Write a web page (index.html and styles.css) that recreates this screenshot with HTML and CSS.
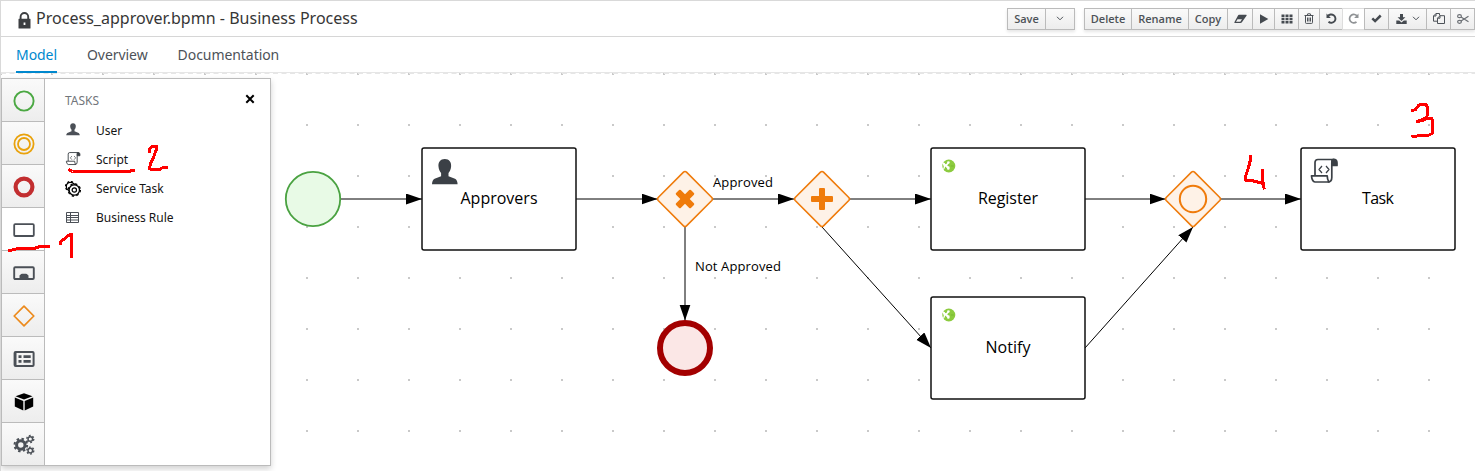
FILE: index.html
```html
<!DOCTYPE html>
<html lang="en">
<head>
<meta charset="utf-8">
<title>Process_approver.bpmn - Business Process</title>
<link rel="stylesheet" href="styles.css">
</head>
<body>
<div class="editor">
  <header class="header">
    <svg class="lock" width="13" height="17" viewBox="0 0 13 17"><path d="M2.600 7V4.800a3.800 3.800 0 0 1 7.600 0V7" fill="none" stroke="#3d3f42" stroke-width="1.900"/><path fill="#3d3f42" fill-rule="evenodd" d="M1 6.800h11q.5 0 .5.500V16q0 .5-.5.500H1q-.5 0-.5-.500V7.300q0-.5.500-.500ZM5.600 10.500v2.500h1.800v-2.500Z"/></svg>
    <h1 class="title">Process_approver.bpmn - Business Process</h1>
    <div class="toolbar">
      <div class="group save-group">
        <button class="btn w-save">Save</button>
        <button class="btn w-caret"><svg width="8" height="5" viewBox="0 0 8 5"><path class="line" d="M1 .8 4 3.800 7 .8"/></svg></button>
      </div>
      <div class="group">
        <button class="btn w-delete">Delete</button>
        <button class="btn w-rename">Rename</button>
        <button class="btn w-copy">Copy</button>
        <button class="btn w-eraser"><svg width="13" height="10" viewBox="0 0 13 10"><path class="solid" fill-rule="evenodd" d="M5 .8h7.200q.8.200.3 1L7.900 8.300q-.5.700-1.400.7H.9q-1-.2-.4-1.100L4 1.500Q4.300.8 5 .8ZM2 7.800h4.300l1.700-2.500H3.500Z"/></svg></button>
        <button class="btn w-play"><svg width="10" height="10" viewBox="0 0 10 10"><path class="solid" d="M1 .3 9.300 5 1 9.700Z"/></svg></button>
        <button class="btn w-grid"><svg width="12" height="10" viewBox="0 0 12 10"><path class="solid" d="M.5.500h3v2.400h-3zm4 0h3v2.400h-3zm4 0h3v2.400h-3zm-8 3.300h3v2.400h-3zm4 0h3v2.400h-3zm4 0h3v2.400h-3zm-8 3.300h3v2.400h-3zm4 0h3v2.400h-3zm4 0h3v2.400h-3z"/></svg></button>
        <button class="btn w-trash"><svg width="10" height="11" viewBox="0 0 10 11"><path class="line" d="M.5 2.500h9M3.200 2.300l.5-1.500h2.600l.5 1.500M1.500 2.600v7q0 .8.800.8h5.400q.8 0 .8-.8v-7M3.500 4.500v4M5 4.500v4M6.500 4.500v4"/></svg></button>
        <button class="btn w-undo"><svg width="11" height="11" viewBox="0 0 11 11"><path d="M1.700 3.400A4.200 4.200 0 1 1 2.500 8.800" fill="none" stroke="#454a50" stroke-width="1.900"/><path class="solid" d="M.5.600v4.400h4.400Z"/></svg></button>
        <button class="btn w-redo off"><svg width="11" height="11" viewBox="0 0 11 11"><path d="M9.300 3.400A4.200 4.200 0 1 0 8.500 8.800" fill="none" stroke="#909396" stroke-width="1.700"/><path fill="#909396" d="M10.500.6v4.400H6.100Z"/></svg></button>
        <button class="btn w-check"><svg width="11" height="9" viewBox="0 0 11 9"><path d="m1.300 4.400 2.800 2.700L9.700 1.500" fill="none" stroke="#454a50" stroke-width="2.500"/></svg></button>
        <button class="btn w-download"><svg width="11" height="10" viewBox="0 0 11 10"><path class="solid" fill-rule="evenodd" d="M4 0h3v3.200h2.400L5.500 7 1.600 3.200H4ZM.3 6.500h2.900l2.300 2.100 2.300-2.100h2.900v3.400H.3Z"/></svg><svg class="chev" width="8" height="5" viewBox="0 0 8 5"><path class="line" d="M1 .8 4 3.800 7 .8"/></svg></button>
        <button class="btn w-files"><svg width="12" height="11" viewBox="0 0 12 11"><path class="line" d="M4.500 8.200h-4V3L3 .5h3.500v2M3 .5V3H.5M7 2.700h4.500v7.800h-7V5.200ZM7 2.700v2.500H4.500"/></svg></button>
        <button class="btn w-cut"><svg width="12" height="10" viewBox="0 0 12 10"><g fill="none" stroke="#6b6f74" stroke-width="1.200"><ellipse cx="2.500" cy="2.200" rx="1.900" ry="1.500"/><ellipse cx="2.500" cy="7.800" rx="1.900" ry="1.500"/><path d="m4 3 7.500 4.800M4 7l7.500-4.800"/></g></svg></button>
      </div>
    </div>
  </header>
  <nav class="tabs">
    <a class="tab active">Model</a>
    <a class="tab">Overview</a>
    <a class="tab">Documentation</a>
  </nav>
  <main class="workspace">
    <aside class="palette">
      <div class="categories">
        <div class="cat"><svg width="22" height="22" viewBox="0 0 22 22"><circle cx="11" cy="11" r="9.600" fill="none" stroke="#4ba843" stroke-width="1.900"/></svg></div>
        <div class="cat"><svg width="22" height="22" viewBox="0 0 22 22"><g fill="none" stroke="#e9a20c" stroke-width="1.800"><circle cx="11" cy="11" r="9.600"/><circle cx="11" cy="11" r="6"/></g></svg></div>
        <div class="cat"><svg width="22" height="22" viewBox="0 0 22 22"><circle cx="11" cy="11" r="8.400" fill="none" stroke="#c22e30" stroke-width="4.200"/></svg></div>
        <div class="cat selected"><svg width="22" height="22" viewBox="0 0 22 22"><rect x="1.200" y="5.200" width="19.600" height="11.800" rx="1" fill="none" stroke="#4b5057" stroke-width="1.800"/></svg></div>
        <div class="cat"><svg width="22" height="22" viewBox="0 0 22 22"><rect x="1.200" y="5.200" width="19.600" height="11.800" rx="1" fill="none" stroke="#4b5057" stroke-width="1.900"/><path fill="#4b5057" d="M6.500 17v-3.300q0-.5.600-.7 1-1.200 2-1.200h3.800q1 0 2 1.200.6.200.6.700V17Z"/></svg></div>
        <div class="cat"><svg width="22" height="22" viewBox="0 0 22 22"><path d="M11 1.200 20.800 11 11 20.800 1.200 11Z" fill="none" stroke="#ec8a1c" stroke-width="1.700" stroke-linejoin="round"/></svg></div>
        <div class="cat"><svg width="22" height="22" viewBox="0 0 22 22"><rect x="1.600" y="4" width="19" height="14" rx="1" fill="none" stroke="#4b5057" stroke-width="2"/><path fill="#4b5057" d="M1 4h2.500v14H1zM5.500 7.200h3v2.800h-3zm5 0h7.200v2.800h-7.200zm-5 4.800h3v2.800h-3zm5 0h7.200v2.800h-7.200z"/></svg></div>
        <div class="cat"><svg width="22" height="22" viewBox="0 0 22 22"><path d="M11 2.200 19.500 5.200 11 8.500 2.500 5.200ZM1.800 6.500l8.500 3.400v9.600l-8.500-4ZM20.200 6.500l-8.500 3.400v9.600l8.500-4Z"/></svg></div>
        <div class="cat"><svg width="22" height="22" viewBox="0 0 22 22"><g fill="none" stroke="#4b5057"><circle cx="7.800" cy="11" r="4.200" stroke-width="3"/><circle cx="7.800" cy="11" r="6.300" stroke-width="2" stroke-dasharray="2.470"/><circle cx="17.300" cy="5" r="2.300" stroke-width="1.500"/><circle cx="17.300" cy="5" r="3.500" stroke-width="1.400" stroke-dasharray="1.830"/><circle cx="17.300" cy="16.600" r="2.300" stroke-width="1.500"/><circle cx="17.300" cy="16.600" r="3.500" stroke-width="1.400" stroke-dasharray="1.830"/></g></svg></div>
      </div>
      <div class="items">
        <div class="items-head"><span>TASKS</span><svg width="10" height="10" viewBox="0 0 10 10"><path d="m1.300 1.300 7.400 7.400m0-7.400L1.300 8.700" stroke="#000" stroke-width="2"/></svg></div>
        <div class="item"><svg width="16" height="16" viewBox="0 0 16 16"><path fill="#4b5057" d="M8 .2c2 0 3 1.500 2.800 3.300-.1 1.500-.7 2.500-1.300 3.200v1.500l4.200 1.700q1 .6 1.100 2.300H1.200q.1-1.700 1.100-2.300l4.200-1.700V6.700C5.900 6 5.300 5 5.200 3.500 5 1.700 6 .2 8 .2Z"/></svg><span>User</span></div>
        <div class="item"><svg width="16" height="16" viewBox="-1 1 30 30"><use href="#scroll"/></svg><span>Script</span></div>
        <div class="item"><svg width="16" height="16" viewBox="0 0 16 16"><g fill="none" stroke="#000"><circle cx="5.500" cy="5.500" r="4.200" stroke-width="1.300"/><circle cx="5.500" cy="5.500" r="5" stroke-width="1.200" stroke-dasharray="1.960"/></g><g fill="#fff" stroke="#000"><circle cx="9.300" cy="9" r="5.200" stroke-width="1.300"/><circle cx="9.300" cy="9" r="6.100" fill="none" stroke-width="1.300" stroke-dasharray="2.395"/><circle cx="9.300" cy="9" r="2.200" stroke-width="1.200"/></g></svg><span>Service Task</span></div>
        <div class="item"><svg width="16" height="16" viewBox="0 0 16 16"><path d="M1.500 2.500h12v10h-12ZM1.500 5.500h12M1.500 7.500h12M1.500 10h12M5.500 2.500v10" fill="none" stroke="#4b5057"/></svg><span>Business Rule</span></div>
      </div>
    </aside>
    <svg class="canvas" width="1474" height="398" viewBox="1 73 1474 398">
      <defs>
        <pattern id="dots" x="26" y="48" width="51" height="51" patternUnits="userSpaceOnUse"><rect x="25" y="25" width="2" height="2" fill="#c9c9c9"/></pattern>
        <marker id="head" markerUnits="userSpaceOnUse" markerWidth="18" markerHeight="12" refX="16" refY="5.500" orient="auto"><path d="M0 0 16 5.500 0 11Z"/></marker>
        <g id="scroll" fill="none" stroke="#3b4046" stroke-width="1.700" stroke-linejoin="round"><path d="M5 18V5Q5 2 8 2h16"/><path d="M23.500 2.200q-1.700.4-1.700 3V20q0 4.500-4 4.500"/><path d="M22 3q1.200-1.500 3-1 2 .7 2 3.500V8h-5Z" fill="#3b4046"/><path d="M1.500 18.300h15.700q0 3.500 1.700 6.200H5q-3-.6-3.500-6.200Z"/><path d="M12 8.500 9 12l3 3.500M16 8.500l3 3.500-3 3.500" stroke-width="1.200"/></g>
        <g id="globe"><circle r="6.500" fill="#8ccb3f"/><path fill="#fff" d="M-6.500-3.500-4-3-3.500-1.800-1.800-2.500-1.500-4.500.5-4.800 1-3-1-1.500-1.500-.2.800.8.800 3.200-1 4-2 2-3.500.6-4.500 3-5.800 3.800-5 .5Z"/><path d="M2 0h3" stroke="#73b42d" stroke-width=".8"/></g>
      </defs>
      <rect x="1" y="73" width="1474" height="398" fill="url(#dots)"/>
      <path d="M1 73.500h1474" stroke="#e6e6e6" stroke-dasharray="5 3.500"/>
      <g class="flow">
        <path d="M341 199h81"/><path d="M576 199h81.500"/><path d="M713 199h81"/><path d="M850 199h81"/><path d="M1085 199h80.500"/><path d="M1221 199h80"/>
        <path d="M685 227v93.500"/><path d="M822 227 931 348"/><path d="M1085 348l108-121"/>
      </g>
      <circle cx="313" cy="199" r="27.200" fill="#e8fae6" stroke="#4aa241" stroke-width="1.800"/>
      <circle cx="685" cy="348" r="25" fill="#fbe7e6" stroke="#a30000" stroke-width="6"/>
      <g class="task"><rect x="422" y="148" width="154" height="102" rx="2"/><rect x="931" y="148" width="154" height="102" rx="2"/><rect x="931" y="297" width="154" height="102" rx="2"/><rect x="1301" y="148" width="154" height="102" rx="2"/></g>
      <g class="gateway">
        <path id="gw" d="M683.500 172.200q1.500-1.400 3 0l25.300 25.300q1.400 1.500 0 3l-25.300 25.300q-1.500 1.400-3 0l-25.300-25.300q-1.400-1.500 0-3Z"/>
        <use href="#gw" x="137"/><use href="#gw" x="508"/>
        <circle cx="1193" cy="199" r="13.200"/>
      </g>
      <g fill="#ef7b0b"><g><rect x="811" y="196" width="22" height="6" rx="1"/><rect x="819" y="188" width="6" height="22" rx="1"/></g><g transform="rotate(45 685 199)"><rect x="674.500" y="195.700" width="21" height="6.600" rx="1.200"/><rect x="681.700" y="188.500" width="6.600" height="21" rx="1.200"/></g></g>
      <path fill="#3b4046" d="M444.800 159c4.500 0 6.700 3.300 6.300 7.500-.2 3-1.300 5-2.600 6.600v3.200l6.500 2.500q2.400 1.200 2.600 5.400h-25.600q.2-4.200 2.600-5.400l6.500-2.500v-3.200c-1.300-1.600-2.400-3.600-2.600-6.600-.4-4.200 1.800-7.500 6.300-7.500Z"/>
      <use href="#globe" x="948.800" y="166"/><use href="#globe" x="948.800" y="315"/>
      <use href="#scroll" x="1310" y="157.500"/>
      <g class="label"><text x="499" y="204" textLength="77">Approvers</text><text x="1008" y="204" textLength="60">Register</text><text x="1008" y="353" textLength="45">Notify</text><text x="1378" y="204" textLength="32">Task</text></g>
      <g class="edge-label"><text x="713" y="187" textLength="60">Approved</text><text x="695" y="271" textLength="86">Not Approved</text></g>
    </svg>
  </main>
  <svg class="marks" width="1475" height="471" viewBox="0 0 1475 471">
    <path d="M9.500 250.500l9-2h16l5-2h8.500"/><path d="M60.500 243.500v-1.500l10-8h1v22.500"/>
    <path d="M69.500 170l3 1.500h55l6-1"/><path d="M149.500 151v-2l3-3h4v3l-4 11-2 3-1 6h11l3-2h2.500"/>
    <path d="M1412.500 110.500l3-1 3-4 3-1.500h3.500l2 2v10l-1 2-9 3.500 6-1 3-2h6v15l-4 2h-7l-8 1"/>
    <path d="M1250.500 156.500v3l-2 8-3 9v3.500l8 1 10 2.500M1262 170v5l1 10 1 3"/>
  </svg>
</div>
</body>
</html>
```
FILE: styles.css
```css
* { box-sizing: border-box; }
body { margin: 0; font-family: "Noto Sans", "Open Sans", sans-serif; color: #363636; background: #fff; overflow: hidden; }
.editor { position: relative; width: 1475px; height: 471px; border: solid #d9d9d9; border-width: 1px 0 0 1px; overflow: hidden; }
.header { display: flex; align-items: center; height: 36px; padding-left: 17px; border-bottom: 1px solid #d6d6d6; }
.lock { flex: none; margin-top: 3px; }
.title { margin: 0 0 2px 5px; font-size: 16px; font-weight: 400; line-height: 24px; letter-spacing: .025px; white-space: nowrap; flex: none; }
.toolbar { display: flex; gap: 9px; margin-left: auto; flex: none; }
.group { display: flex; height: 22px; box-shadow: 0 2px 3px rgba(0,0,0,.1); }
.btn { display: flex; align-items: center; justify-content: center; height: 22px; margin: 0; padding: 0; border: 1px solid #bbb; border-right-width: 0; background: linear-gradient(#fafafa, #ededed); color: #4d5258; font: 600 11px "Open Sans", sans-serif; white-space: nowrap; }
.btn:last-child { border-right-width: 1px; }
.off { background: #fff; border-color: #ddd; }
.solid { fill: #454a50; }
.line { fill: none; stroke: #4d5258; stroke-width: 1; }
.chev { margin-left: 5px; }
.w-save { width: 38px; } .w-caret { width: 30px; }
.w-delete { width: 47px; } .w-rename { width: 57px; } .w-copy { width: 39px; }
.w-eraser { width: 25px; } .w-play { width: 22px; } .w-grid { width: 24px; } .w-trash { width: 21px; }
.w-undo { width: 23px; } .w-redo { width: 22px; } .w-check { width: 24px; } .w-download { width: 38px; }
.w-files { width: 24px; } .w-cut { width: 25px; }
.tabs { display: flex; gap: 30px; height: 36px; padding-left: 15px; border-bottom: 1px solid #e6e6e6; }
.tab { height: 36px; font-size: 14px; line-height: 35px; letter-spacing: -.06px; color: #4d5258; }
.active { color: #0088ce; border-bottom: 2px solid #0088ce; }
.workspace { position: relative; height: 398px; }
.canvas { display: block; }
.palette { position: absolute; left: 0; top: 5px; display: flex; width: 270px; height: 388px; border: 1px solid #bbb; background: #fff; box-shadow: 0 3px 6px rgba(0,0,0,.18); }
.categories { width: 43px; flex: none; border-right: 1px solid #bbb; }
.cat { display: flex; align-items: center; justify-content: center; height: 43px; padding: 1px 0 0 1px; border-bottom: 1px solid #bbb; background: linear-gradient(#fafafa, #ededed); }
.cat:last-child { border-bottom: 0; height: 42px; }
.selected { background: #fff; }
.items { flex: 1; padding: 10px 15px 0 20px; font-size: 12px; color: #151515; }
.items-head { display: flex; justify-content: space-between; align-items: flex-start; height: 27px; line-height: 24px; color: #72767b; }
.items-head svg { margin-top: 5px; }
.item { display: flex; align-items: center; gap: 15px; height: 29px; }
.item svg { flex: none; }
.flow path { fill: none; stroke: #000; stroke-width: 1; marker-end: url(#head); }
.task rect { fill: #fff; stroke: #111; stroke-width: 1.5; }
.gateway { fill: #fef2e7; stroke: #ef7b0b; stroke-width: 1.6; }
.gateway circle { fill: none; stroke-width: 2; }
.label { font: 16px "Open Sans", sans-serif; fill: #000; text-anchor: middle; }
.edge-label { font: 13px "Open Sans", sans-serif; fill: #000; }
.marks { position: absolute; left: -1px; top: -1px; pointer-events: none; }
.marks path { fill: none; stroke: #f00; stroke-width: 3; stroke-linejoin: round; stroke-linecap: square; shape-rendering: crispEdges; }
```
